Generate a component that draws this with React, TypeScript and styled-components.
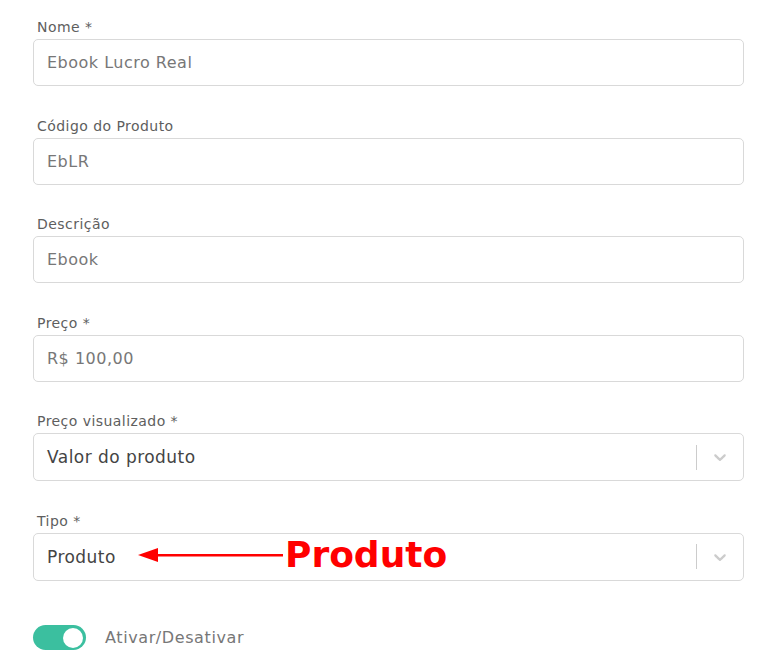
import React from "react";
import styled, { createGlobalStyle } from "styled-components";

const Global = createGlobalStyle`
  html, body { margin: 0; padding: 0; background: #fff; }
  body { font-family: "DejaVu Sans", "Noto Sans", sans-serif; }
  * { box-sizing: border-box; }
`;

const Form = styled.div`
  width: 711px;
  margin-left: 33px;
  padding-top: 17px;
  display: flex;
  flex-direction: column;
  gap: 29.5px;
  position: relative;
`;

const Field = styled.div`
  display: flex;
  flex-direction: column;
  gap: 2px;
`;

const Label = styled.label`
  font-size: 14px;
  line-height: 20px;
  letter-spacing: 0.45px;
  color: #5e5e5e;
  padding-left: 4px;
`;

const Input = styled.div`
  height: 47px;
  border: 1px solid #d9d9d9;
  border-radius: 5px;
  display: flex;
  align-items: center;
  padding: 0 13px;
  font-size: 16px;
  letter-spacing: 0.5px;
  color: #777;
`;

const Select = styled(Input)`
  height: 48px;
  font-size: 17px;
  letter-spacing: 0.45px;
  color: #444;
  padding-right: 0;
  position: relative;
`;

const Value = styled.span`
  flex: 1;
`;

const Indicators = styled.div`
  display: flex;
  align-items: center;
  height: 100%;
`;

const Divider = styled.span`
  width: 1px;
  height: 25px;
  background: #ccc;
`;

const Chevron = styled.div`
  width: 46px;
  display: flex;
  justify-content: center;
  align-items: center;
  color: #ccc;
`;

const ToggleRow = styled.div`
  display: flex;
  align-items: center;
  gap: 19px;
  margin-top: 15px;
`;

const Track = styled.div`
  width: 53px;
  height: 25px;
  border-radius: 13px;
  background: #3bbf9f;
  display: flex;
  align-items: center;
  justify-content: flex-end;
  padding-right: 3px;
`;

const Knob = styled.span`
  width: 20px;
  height: 20px;
  border-radius: 50%;
  background: #fff;
`;

const ToggleLabel = styled.span`
  font-size: 16px;
  letter-spacing: 0.6px;
  color: #777;
`;

const Annotation = styled.div`
  position: absolute;
  left: 104px;
  top: 3px;
  display: flex;
  align-items: center;
  pointer-events: none;
  letter-spacing: 0;
`;

const AnnotText = styled.span`
  font-family: "DejaVu Sans", sans-serif;
  font-weight: bold;
  font-size: 36px;
  color: #ff0000;
  line-height: 1;
  margin-left: 2px;
`;

const Arrow = () => (
  <svg width="145" height="20" viewBox="0 0 145 20">
    <polygon points="0,10 20,3 20,17" fill="#ff0000" />
    <rect x="15" y="9" width="130" height="2.5" fill="#ff0000" />
  </svg>
);

const ChevronIcon = () => (
  <svg width="20" height="20" viewBox="0 0 20 20" fill="currentColor">
    <path d="M4.516 7.548c0.436-0.446 1.043-0.481 1.576 0l3.908 3.747 3.908-3.747c0.533-0.481 1.141-0.446 1.574 0 0.436 0.445 0.408 1.197 0 1.615-0.406 0.418-4.695 4.502-4.695 4.502-0.217 0.223-0.502 0.335-0.787 0.335s-0.57-0.112-0.789-0.335c0 0-4.287-4.084-4.695-4.502s-0.436-1.170 0-1.615z" />
  </svg>
);

const inputs = [
  { label: "Nome *", value: "Ebook Lucro Real" },
  { label: "Código do Produto", value: "EbLR" },
  { label: "Descrição", value: "Ebook" },
  { label: "Preço *", value: "R$ 100,00" },
];

export default function App() {
  return (
    <>
      <Global />
      <Form>
        {inputs.map((f) => (
          <Field key={f.label}>
            <Label>{f.label}</Label>
            <Input>{f.value}</Input>
          </Field>
        ))}
        <Field>
          <Label>Preço visualizado *</Label>
          <Select>
            <Value>Valor do produto</Value>
            <Indicators>
              <Divider />
              <Chevron><ChevronIcon /></Chevron>
            </Indicators>
          </Select>
        </Field>
        <Field>
          <Label>Tipo *</Label>
          <Select>
            <Value>Produto</Value>
            <Indicators>
              <Divider />
              <Chevron><ChevronIcon /></Chevron>
            </Indicators>
            <Annotation>
              <Arrow />
              <AnnotText>Produto</AnnotText>
            </Annotation>
          </Select>
        </Field>
        <ToggleRow>
          <Track><Knob /></Track>
          <ToggleLabel>Ativar/Desativar</ToggleLabel>
        </ToggleRow>
      </Form>
    </>
  );
}
